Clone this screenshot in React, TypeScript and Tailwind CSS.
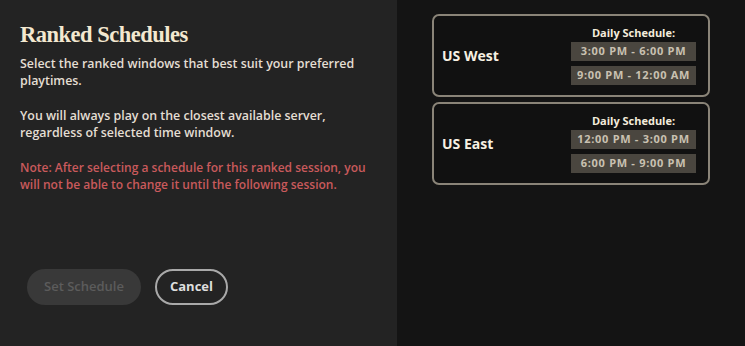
import React from 'react';

type Region = {
  name: string;
  times: string[];
};

const regions: Region[] = [
  { name: 'US West', times: ['3:00 PM - 6:00 PM', '9:00 PM - 12:00 AM'] },
  { name: 'US East', times: ['12:00 PM - 3:00 PM', '6:00 PM - 9:00 PM'] },
];

const sans = "font-['Open_Sans','Noto_Sans',sans-serif]";

function RegionCard({ region }: { region: Region }) {
  return (
    <div className="h-[83px] w-[278px] rounded-[7px] border-2 border-[#8a8478] bg-[#111111] flex items-center justify-between pl-[8px] pr-[12px]">
      <span className="text-[14px] font-bold text-[#f7f0e2]">{region.name}</span>
      <div className="flex flex-col items-center w-[125px]">
        <span className="text-[11px] font-bold text-[#f4ecdc] leading-[14px] mb-[2px]">Daily Schedule:</span>
        <div className="flex flex-col gap-[5px] w-full">
          {region.times.map((t) => (
            <div
              key={t}
              className="h-[19px] w-full bg-[#4a463f] flex items-center justify-center text-[11px] font-bold tracking-[0.7px] text-[#c9c1b1]"
            >
              {t}
            </div>
          ))}
        </div>
      </div>
    </div>
  );
}

export default function App() {
  return (
    <div className={`flex w-[745px] h-[346px] ${sans}`}>
      {/* left: info + actions */}
      <div className="w-[397px] h-full bg-[#232323] flex flex-col pl-[20px] pr-[20px] pt-[21px]">
        <h1 className="font-['Liberation_Serif','DejaVu_Serif',serif] font-bold text-[22.5px] leading-[28px] text-[#f3e8d0] tracking-[-0.5px]">
          Ranked Schedules
        </h1>
        <p className="mt-[6px] text-[12.4px] leading-[17px] font-semibold text-[#e4ded3]">
          Select the ranked windows that best suit your preferred playtimes.
        </p>
        <p className="mt-[18px] text-[12.4px] leading-[17px] font-semibold text-[#e4ded3]">
          You will always play on the closest available server, regardless of selected time window.
        </p>
        <p className="mt-[18px] text-[12px] leading-[17px] font-semibold text-[#c95a5c]">
          Note: After selecting a schedule for this ranked session, you will not be able to change it until the
          following session.
        </p>
        <div className="flex items-center gap-[14px] mt-[76px] pl-[7px]">
          <button className="h-[36px] w-[114px] rounded-full bg-[#393939] text-[13px] font-semibold text-[#5c5c5c]">
            Set Schedule
          </button>
          <button className="h-[36px] w-[73px] rounded-full border-2 border-[#a9a9a9] text-[13px] font-bold text-[#dedede]">
            Cancel
          </button>
        </div>
      </div>

      {/* right: regions */}
      <div className="flex-1 h-full bg-[#141414] pl-[35px] pt-[14px] flex flex-col gap-[5px]">
        {regions.map((r) => (
          <RegionCard key={r.name} region={r} />
        ))}
      </div>
    </div>
  );
}
